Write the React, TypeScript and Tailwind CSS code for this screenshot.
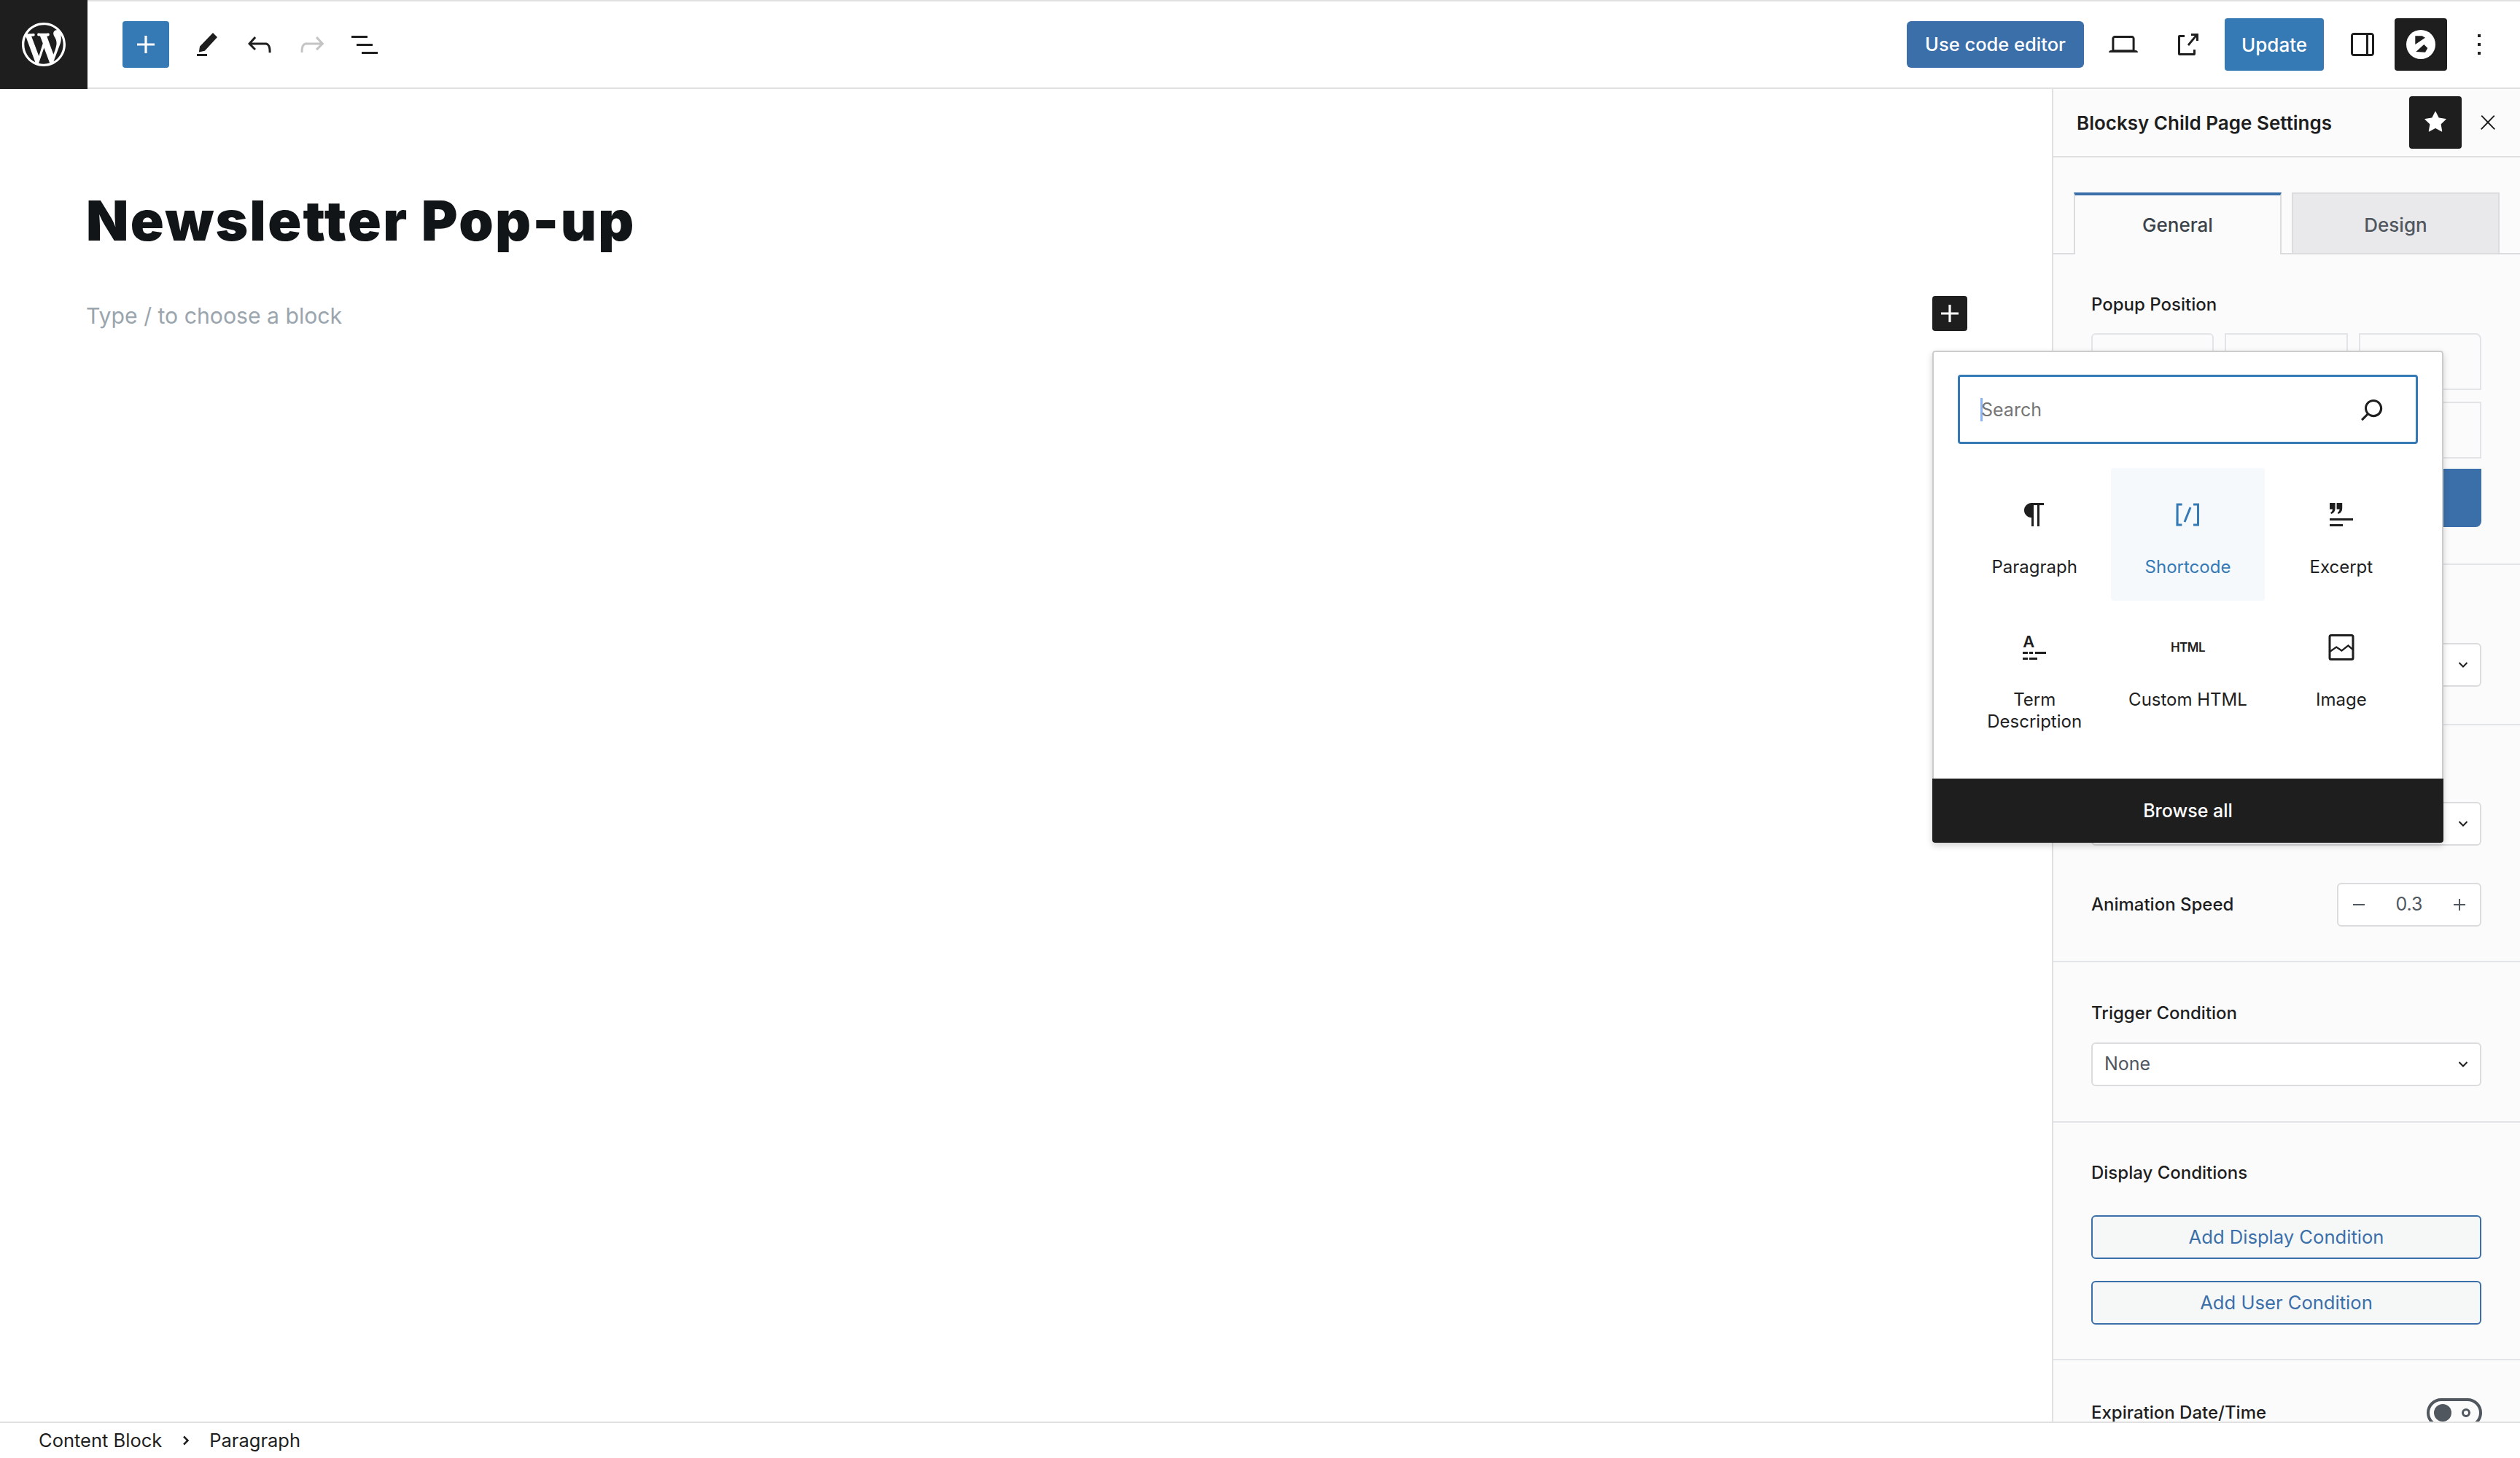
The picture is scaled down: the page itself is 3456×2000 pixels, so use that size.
import { ReactNode } from "react";

const Icon = ({ d, className = "", size = "w-[48px] h-[48px]" }: { d: string; className?: string; size?: string }) => (
    <svg viewBox="0 0 24 24" className={`${size} shrink-0 fill-current ${className}`}>
        <path d={d} />
    </svg>
);

const plus = "M18 11.2h-5.2V6h-1.6v5.2H6v1.6h5.2V18h1.6v-5.2H18z";
const undo = "M18.3 11.7c-.6-.6-1.4-.9-2.3-.9H6.7l2.9-3.3-1.1-1-4.5 5L8.5 16l1-1-2.7-2.7H16c.5 0 .9.2 1.3.5 1 1 1 3.4 1 4.5v.3h1.5v-.2c0-1.5 0-4.3-1.5-5.7z";
const redo = "M15.6 6.5l-1.1 1 2.9 3.3H8c-.9 0-1.7.3-2.3.9-1.4 1.5-1.4 4.2-1.4 5.6v.2h1.5v-.3c0-1.1 0-3.5 1-4.5.3-.3.7-.5 1.3-.5h9.2L14.5 15l1.1 1.1 4.6-4.6-4.6-5z";
const listView = "M3 6h11v1.5H3V6zm3.5 5.5h11V13h-11v-1.5zM21 17H10v1.5h11V17z";
const pencil = "M6.4 17.2 7 13.4 16 4l3 3-8.6 9.4-4 .8zM5 18.5h7V20H5z";
const desktop = "M20.5 16h-.7V8c0-1.1-.9-2-2-2H6.2c-1.1 0-2 .9-2 2v8h-.7c-.8 0-1.5.7-1.5 1.5h20c0-.8-.7-1.5-1.5-1.5zM5.7 8c0-.3.2-.5.5-.5h11.6c.3 0 .5.2.5.5v7.6H5.7V8z";
const external = "M19.5 4.5h-5V6h2.44l-4.97 5.97 1.06 1.06L18 7.06V9.5h1.5v-5ZM6.5 5.5a1 1 0 0 0-1 1v12a1 1 0 0 0 1 1h10a1 1 0 0 0 1-1v-3H16v2.5h-9V7h3V5.500h-3.500Z";
const drawer = "M18 4H6c-1.100 0-2 .9-2 2v12c0 1.100.9 2 2 2h12c1.100 0 2-.9 2-2V6c0-1.100-.9-2-2-2zM6 5.500h8.500v13H6c-.3 0-.5-.2-.5-.5V6c0-.3.2-.5.5-.5zm12.500 12.500c0 .3-.2.5-.5.5h-2v-13h2c.3 0 .5.2.5.5v12z";
const more = "M13 19h-2v-2h2v2zm0-6h-2v-2h2v2zm0-6h-2V5h2v2z";
const star = "M11.776 4.454a.25.25 0 0 1 .448 0l2.069 4.192a.25.25 0 0 0 .188.137l4.626.672a.25.25 0 0 1 .139.426l-3.348 3.263a.25.25 0 0 0-.072.222l.79 4.607a.25.25 0 0 1-.362.263l-4.138-2.175a.25.25 0 0 0-.232 0l-4.138 2.175a.25.25 0 0 1-.363-.263l.79-4.607a.25.25 0 0 0-.071-.222L4.754 9.881a.25.25 0 0 1 .139-.426l4.626-.672a.25.25 0 0 0 .188-.137l2.069-4.192Z";
const close = "M13 11.8l6.1-6.3-1-1-6.1 6.2-6.1-6.2-1 1 6.100 6.300-6.500 6.700 1 1 6.500-6.600 6.500 6.600 1-1z";
const search = "M13 5c-3.300 0-6 2.700-6 6 0 1.400.5 2.700 1.300 3.700l-3.800 3.800 1.100 1.100 3.800-3.800c1 .8 2.300 1.300 3.700 1.300 3.300 0 6-2.700 6-6S16.300 5 13 5zm0 10.500c-2.500 0-4.500-2-4.500-4.500s2-4.500 4.500-4.500 4.500 2 4.500 4.500-2 4.500-4.500 4.500z";
const paragraph = "m9.99609 14v-.2251l.00391.0001v6.225h1.5v-14.5h2.5v14.5h1.5v-14.5h3v-1.5h-8.50391c-2.76142 0-5 2.23858-5 5 0 2.7614 2.23858 5 5 5z";
const shortcode = "M16 4.2v1.5h2.500v12.500H16v1.500h4V4.200h-4zM4.200 19.800h4v-1.500H5.800V5.800h2.500V4.200h-4l-.1 15.600zm5.100-3.100l1.400.6 4-10-1.400-.6-4 10z";
const excerpt = "M4 4h3.800v3.600c0 2-1 3.300-2.800 3.900l-.4-1c.9-.5 1.300-1.100 1.400-2.300H4zM8.800 4h3.800v3.600c0 2-1 3.300-2.800 3.900l-.4-1c.9-.5 1.300-1.100 1.400-2.300H8.800zM4 14.500h16V16H4zM4 18.500h9V20H4z";
const termLines = "M4 15h3.500v1.500H4zM8.500 15H11v1.500H8.500zM12.500 15H20v1.500h-7.500zM4 19h3.500v1.500H4zM8.500 19H14v1.500H8.500z";
const wordpress = "M20 10c0-5.510-4.490-10-10-10C4.480 0 0 4.490 0 10c0 5.520 4.480 10 10 10 5.510 0 10-4.480 10-10zM7.780 15.370L4.370 6.220c.55-.02 1.170-.08 1.170-.08.5-.06.44-1.130-.06-1.110 0 0-1.450.11-2.370.11-.18 0-.37 0-.58-.01C4.120 2.690 6.870 1.110 10 1.110c2.330 0 4.450.87 6.050 2.340-.68-.11-1.650.39-1.650 1.580 0 .74.45 1.360.9 2.100.35.61.55 1.360.55 2.460 0 1.490-1.400 5-1.400 5l-3.030-8.370c.54-.02.82-.17.82-.17.5-.05.44-1.250-.06-1.220 0 0-1.440.12-2.380.12-.87 0-2.330-.12-2.330-.12-.5-.03-.56 1.200-.06 1.220l.92.08 1.260 3.410zM17.410 10c.24-.64.74-1.870.43-4.250.7 1.290 1.050 2.710 1.050 4.250 0 3.290-1.730 6.240-4.400 7.780.97-2.590 1.940-5.200 2.920-7.780zM6.100 18.090C3.120 16.650 1.110 13.530 1.110 10c0-1.300.23-2.480.72-3.590C3.250 10.300 4.670 14.200 6.100 18.090zm4.030-6.630l2.580 6.980c-.86.29-1.760.45-2.710.45-.79 0-1.570-.11-2.290-.33.81-2.380 1.620-4.740 2.420-7.100z";

const Chevron = ({ className = "" }: { className?: string }) => (
    <svg viewBox="0 0 14 10" className={`w-[14px] h-[10px] fill-none stroke-current stroke-2 ${className}`}>
        <path d="M1.500 2 7 7.500 12.500 2" />
    </svg>
);

const ImageIcon = () => (
    <svg viewBox="0 0 24 24" className="w-[48px] h-[48px] fill-none stroke-current">
        <rect x="4" y="3.750" width="16" height="16.500" rx="1" strokeWidth="1.500" />
        <path d="M4 15l4.600-3.200 3.600 2.500 4.500-3.500 3.500 3" strokeWidth="1.200" />
    </svg>
);

const TermIcon = () => (
    <div className="relative w-[48px] h-[48px]">
        <span className="absolute left-[8px] top-[3px] text-[22px] leading-[26px] font-semibold">A</span>
        <Icon d={termLines} className="absolute left-0 top-0" />
    </div>
);

interface Block {
    label: ReactNode;
    icon: ReactNode;
    active?: boolean;
}

const blocks: Block[] = [
    { label: "Paragraph", icon: <Icon d={paragraph} /> },
    { label: "Shortcode", icon: <Icon d={shortcode} />, active: true },
    { label: "Excerpt", icon: <Icon d={excerpt} /> },
    { label: <>Term<br />Description</>, icon: <TermIcon /> },
    { label: "Custom HTML", icon: <span className="h-[48px] pt-[2px] flex items-center text-[17px] font-semibold tracking-[-0.5px]">HTML</span> },
    { label: "Image", icon: <ImageIcon /> },
];

const Select = ({ value }: { value?: string }) => (
    <div className="h-[60px] flex items-center justify-between pl-[16px] pr-[16px] bg-white border-2 border-[#dcdcde] rounded-[6px] text-[25px] text-[#50575e]">
        <span>{value}</span>
        <Chevron className="text-[#1e1e1e]" />
    </div>
);

const Label = ({ children }: { children: ReactNode }) => (
    <div className="text-[24px] leading-[32px] font-medium text-[#1e1e1e]">{children}</div>
);

const OutlineButton = ({ children }: { children: ReactNode }) => (
    <div className="h-[60px] flex items-center justify-center bg-[#f6f8f8] border-2 border-[#3b6faa] rounded-[6px] text-[25.6px] text-[#3b6faa]">
        {children}
    </div>
);

const Blocksy = () => (
    <svg viewBox="0 0 40 40" className="w-[40px] h-[40px]">
        <circle cx="20" cy="20" r="20" fill="#fff" />
        <path d="M12.300 8.300h9.400l4.300 2.400-13.700 9.300zM13.300 30l11-10 5 5-3.300 5.700z" fill="#1e1e1e" />
    </svg>
);

export default function App() {
    return (
        <div className="relative w-[3456px] h-[2000px] flex flex-col overflow-hidden bg-white text-[#1e1e1e] font-['Inter',sans-serif]">
            {/* top bar */}
            <div className="h-[122px] flex shrink-0">
                <div className="w-[120px] flex items-center justify-center bg-[#1e1e1e] text-white">
                    <svg viewBox="0 0 20 20" className="w-[60px] h-[60px] fill-current">
                        <path d={wordpress} />
                    </svg>
                </div>
                <div className="flex-1 flex items-center border-y-2 border-[#e0e0e0] pl-[48px] pr-[32px]">
                    <div className="w-[64px] h-[64px] flex items-center justify-center bg-[#3579b5] rounded-[4px] text-white">
                        <Icon d={plus} />
                    </div>
                    <Icon d={pencil} className="ml-[28px]" />
                    <Icon d={undo} className="ml-[24px]" />
                    <Icon d={redo} className="ml-[24px] text-[#c4c4c4]" />
                    <Icon d={listView} className="ml-[24px]" />

                    <div className="ml-auto w-[243px] h-[64px] flex items-center justify-center bg-[#3b6faa] rounded-[6px] text-white text-[25.5px] font-medium">Use code editor</div>
                    <Icon d={desktop} className="ml-[30px]" />
                    <Icon d={external} className="ml-[40px]" />
                    <div className="ml-[27px] w-[136px] h-[72px] flex items-center justify-center bg-[#3579b5] rounded-[4px] text-white text-[26px] font-medium">Update</div>
                    <Icon d={drawer} className="ml-[29px]" />
                    <div className="ml-[20px] w-[72px] h-[72px] flex items-center justify-center bg-[#1e1e1e] rounded-[4px]">
                        <Blocksy />
                    </div>
                    <Icon d={more} className="ml-[20px]" />
                </div>
            </div>

            <div className="flex-1 flex min-h-0">
                {/* editor canvas */}
                <div className="flex-1 pl-[118px] pt-[133px]">
                    <h1 className="text-[76px] leading-[94px] font-black tracking-[2.3px] text-[#111518]">Newsletter Pop-up</h1>
                    <p className="mt-[62px] text-[30.2px] leading-[44px] text-[#9aa5ae]">Type / to choose a block</p>
                </div>

                {/* settings sidebar */}
                <div className="w-[642px] flex flex-col border-l-2 border-[#e0e0e0] bg-[#fbfbfc] overflow-hidden">
                    <div className="h-[94px] shrink-0 flex items-center border-b-2 border-[#e0e0e0] pl-[32px] pr-[28px]">
                        <span className="text-[26px] font-semibold">Blocksy Child Page Settings</span>
                        <div className="ml-auto w-[72px] h-[72px] flex items-center justify-center bg-[#1e1e1e] rounded-[4px] text-white">
                            <Icon d={star} />
                        </div>
                        <Icon d={close} size="w-[32px] h-[32px]" className="ml-[20px]" />
                    </div>

                    <div className="h-[133px] shrink-0 flex items-end gap-[14px] pl-[28px] border-b-2 border-[#dcdcde]">
                        <div className="relative -mb-[2px] w-[285px] h-[85px] flex items-center justify-center bg-[#fbfbfc] border-x-2 border-x-[#dcdcde] border-t-4 border-t-[#3b6faa] text-[26px] font-medium text-[#3c434a]">General</div>
                        <div className="w-[285px] h-[83px] pt-[4px] flex items-center justify-center bg-[#e9e9eb] border-x-2 border-t-2 border-[#dcdcde] text-[26px] font-medium text-[#50575e]">Design</div>
                    </div>

                    <section className="shrink-0 pl-[52px] pr-[53px] pt-[53px] pb-[50px] border-b-2 border-[#e2e4e7]">
                        <Label>Popup Position</Label>
                        <div className="mt-[23px] grid grid-cols-3 gap-x-[15px] gap-y-[16px]">
                            <div className="h-[78px] border-2 border-[#e2e4e7] rounded-t-[6px]" />
                            <div className="h-[78px] border-2 border-[#e2e4e7]" />
                            <div className="h-[78px] border-2 border-[#e2e4e7] rounded-tr-[8px]" />
                            <div className="h-[78px] border-2 border-[#e2e4e7]" />
                            <div className="h-[78px] border-2 border-[#e2e4e7]" />
                            <div className="h-[78px] border-2 border-[#e2e4e7]" />
                        </div>
                        <div className="mt-[14px] h-[80px] bg-[#3b6faa] rounded-b-[8px]" />
                    </section>

                    <section className="shrink-0 pl-[52px] pr-[53px] pt-[107px] pb-[51px] border-b-2 border-[#e2e4e7]">
                        <Select />
                    </section>

                    <section className="shrink-0 pl-[52px] pr-[53px] pt-[105px] pb-[47px] border-b-2 border-[#e2e4e7]">
                        <Select />
                        <div className="mt-[51px] flex items-center justify-between">
                            <Label>Animation Speed</Label>
                            <div className="w-[198px] h-[60px] flex items-center justify-between px-[20px] bg-white border-2 border-[#dcdcde] rounded-[6px] text-[#50575e]">
                                <span className="w-[16px] h-[2px] bg-[#50575e]" />
                                <span className="text-[25px]">0.3</span>
                                <span className="relative w-[16px] h-[16px]">
                                    <span className="absolute left-0 top-[7px] w-[16px] h-[2px] bg-[#50575e]" />
                                    <span className="absolute left-[7px] top-0 w-[2px] h-[16px] bg-[#50575e]" />
                                </span>
                            </div>
                        </div>
                    </section>

                    <section className="shrink-0 pl-[52px] pr-[53px] pt-[54px] pb-[48px] border-b-2 border-[#e2e4e7]">
                        <Label>Trigger Condition</Label>
                        <div className="mt-[24px]"><Select value="None" /></div>
                    </section>

                    <section className="shrink-0 pl-[52px] pr-[53px] pt-[53px] pb-[47px] border-b-2 border-[#e2e4e7]">
                        <Label>Display Conditions</Label>
                        <div className="mt-[42px] flex flex-col gap-[30px]">
                            <OutlineButton>Add Display Condition</OutlineButton>
                            <OutlineButton>Add User Condition</OutlineButton>
                        </div>
                    </section>

                    <section className="shrink-0 pl-[52px] pr-[52px] pt-[52px] flex items-start justify-between">
                        <div className="pt-[4px]"><Label>Expiration Date/Time</Label></div>
                        <div className="w-[76px] h-[40px] flex items-center justify-between pl-[6px] pr-[12px] border-4 border-[#50575e] rounded-full">
                            <span className="w-[24px] h-[24px] rounded-full bg-[#50575e]" />
                            <span className="w-[12px] h-[12px] rounded-full border-[3px] border-[#50575e]" />
                        </div>
                    </section>
                </div>
            </div>

            {/* breadcrumb */}
            <div className="h-[50px] shrink-0 flex items-center pl-[53px] border-t-2 border-[#e0e0e0] bg-white text-[25.5px] text-[#1e1e1e]">
                <span>Content Block</span>
                <svg viewBox="0 0 10 14" className="ml-[28px] w-[10px] h-[14px] fill-none stroke-current stroke-[2.5px]">
                    <path d="M2 1.500 7.500 7 2 12.500" />
                </svg>
                <span className="ml-[27px]">Paragraph</span>
            </div>

            {/* block inserter */}
            <div className="absolute left-[2650px] top-[406px] w-[48px] h-[48px] flex items-center justify-center bg-[#1e1e1e] rounded-[4px] text-white">
                <Icon d={plus} />
            </div>
            <div className="absolute left-[2650px] top-[481px] w-[701px] h-[675px] flex flex-col bg-white rounded-[4px] overflow-hidden shadow-[0_4px_10px_rgba(0,0,0,0.18)]">
                <div className="flex-1 border-x-2 border-t-2 border-[#cccccc] rounded-t-[4px] px-[33px] pt-[31px]">
                    <div className="h-[95px] flex items-center pl-[28px] pr-[36px] border-[3px] border-[#3579b5] rounded-[4px]">
                        <span className="w-[3px] h-[32px] bg-[#8ab4f8]" />
                        <span className="-ml-[2px] pt-[2px] text-[25px] text-[#757575]">Search</span>
                        <Icon d={search} className="ml-auto" />
                    </div>
                    <div className="mt-[33px] grid grid-cols-3">
                        {blocks.map((block, index) => (
                            <div
                                key={index}
                                className={`h-[182px] pt-[40px] flex flex-col items-center rounded-[4px] ${block.active ? "bg-[#f6f9fc] text-[#3579b5]" : ""}`}
                            >
                                {block.icon}
                                <div className="mt-[33px] text-[24px] leading-[30px] text-center">{block.label}</div>
                            </div>
                        ))}
                    </div>
                </div>
                <div className="h-[88px] pt-[2px] shrink-0 flex items-center justify-center bg-[#1e1e1e] text-white text-[25px] font-medium">Browse all</div>
            </div>
        </div>
    );
}
